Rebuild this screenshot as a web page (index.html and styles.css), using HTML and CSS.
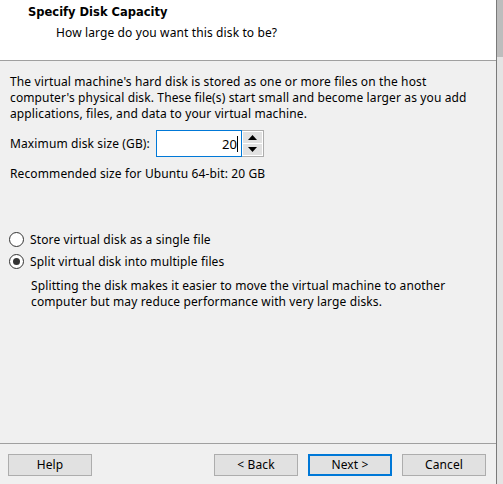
FILE: index.html
```html
<!DOCTYPE html>
<html>
<head>
<meta charset="utf-8">
<link rel="stylesheet" href="styles.css">
</head>
<body>
<div class="window">
  <div class="dialog">
    <div class="header">
      <div class="title">Specify Disk Capacity</div>
      <div class="subtitle">How large do you want this disk to be?</div>
    </div>
    <div class="content">
      <p class="intro">The virtual machine's hard disk is stored as one or more files on the host<br>computer's physical disk. These file(s) start small and become larger as you add<br>applications, files, and data to your virtual machine.</p>
      <div class="size-row">
        <span class="label">Maximum disk size (GB):</span>
        <div class="spin">
          <div class="spin-input"><span>20</span><span class="caret"></span></div>
          <div class="spin-buttons">
            <div class="spin-btn"><svg width="9" height="5" viewBox="0 0 9 5"><path d="M4.5 0 L9 5 L0 5 Z" fill="#000"/></svg></div>
            <div class="spin-btn"><svg width="9" height="5" viewBox="0 0 9 5"><path d="M0 0 L9 0 L4.5 5 Z" fill="#000"/></svg></div>
          </div>
        </div>
      </div>
      <p class="recommend">Recommended size for Ubuntu 64-bit: 20 GB</p>
      <div class="options">
        <label class="radio"><span class="circle"></span><span>Store virtual disk as a single file</span></label>
        <label class="radio"><span class="circle checked"></span><span>Split virtual disk into multiple files</span></label>
        <p class="option-desc">Splitting the disk makes it easier to move the virtual machine to another<br>computer but may reduce performance with very large disks.</p>
      </div>
    </div>
    <div class="footer">
      <button class="btn">Help</button>
      <div class="spacer"></div>
      <button class="btn">&lt; Back</button>
      <button class="btn default">Next &gt;</button>
      <button class="btn">Cancel</button>
    </div>
  </div>
  <div class="edge"></div>
</div>
</body>
</html>
```

FILE: styles.css
```css
html, body {
  margin: 0;
  padding: 0;
}
body {
  width: 503px;
  height: 484px;
  overflow: hidden;
  font-family: "Noto Sans", "DejaVu Sans", sans-serif;
  font-size: 12px;
  letter-spacing: 0.12px;
  color: #000;
  background: #f0f0f0;
}
.window {
  display: flex;
  height: 484px;
}
.dialog {
  width: 496px;
  border-right: 1px solid #7a7a7a;
  display: flex;
  flex-direction: column;
  background: #f0f0f0;
}
.edge {
  flex: 1;
  background: linear-gradient(to bottom, #bdbdbd 0, #bdbdbd 57px, #e4e4e4 57px, #e4e4e4 100%);
}
.header {
  background: #fff;
  border-bottom: 1px solid #a0a0a0;
  box-sizing: border-box;
  height: 61px;
}
.title {
  font-family: "DejaVu Sans", sans-serif;
  font-weight: bold;
  font-size: 11.5px;
  letter-spacing: 0;
  margin: 5px 0 0 28px;
  line-height: 15px;
}
.subtitle {
  margin: 5px 0 0 56px;
  line-height: 16px;
}
.content {
  flex: 1;
  padding: 13px 10px 0 10px;
  border-bottom: 1px solid #a0a0a0;
}
p {
  margin: 0;
}
.intro {
  line-height: 16px;
}
.size-row {
  display: flex;
  align-items: center;
  margin-top: 8px;
  height: 27px;
}
.label {
  width: 146px;
}
.spin {
  display: flex;
  height: 27px;
}
.spin-input {
  width: 81px;
  border: 1px solid #0078d7;
  background: #fff;
  display: flex;
  justify-content: flex-end;
  align-items: center;
  padding-right: 3px;
  font-size: 13px;
}
.caret {
  width: 1px;
  height: 16px;
  background: #000;
}
.spin-buttons {
  display: flex;
  flex-direction: column;
  width: 19px;
  border: 1px solid #adadad;
  border-left: none;
  background: #fff;
  padding: 1px;
  gap: 1px;
}
.spin-btn {
  flex: 1;
  background: #e1e1e1;
  display: flex;
  align-items: center;
  justify-content: center;
}
.recommend {
  margin-top: 9px;
  line-height: 16px;
}
.options {
  margin-top: 46px;
}
.radio {
  display: flex;
  align-items: center;
  height: 22px;
  gap: 6px;
}
.circle {
  width: 15px;
  height: 15px;
  border: 1px solid #333;
  border-radius: 50%;
  background: #fff;
  box-sizing: border-box;
  position: relative;
  margin-left: -1px;
}
.circle.checked::after {
  content: "";
  position: absolute;
  left: 3px;
  top: 3px;
  width: 7px;
  height: 7px;
  border-radius: 50%;
  background: #333;
}
.option-desc {
  margin: 6px 0 0 21px;
  line-height: 16px;
}
.footer {
  height: 40px;
  display: flex;
  align-items: flex-start;
  padding: 10px 10px 0 8px;
  gap: 10px;
  box-sizing: border-box;
}
.spacer {
  flex: 1;
}
.btn {
  width: 84px;
  height: 22px;
  border: 1px solid #adadad;
  background: #e1e1e1;
  font-family: "Noto Sans", "DejaVu Sans", sans-serif;
  font-size: 12px;
  letter-spacing: 0.12px;
  color: #000;
  padding: 0;
  line-height: 18px;
}
.btn.default {
  border: 2px solid #0078d7;
}
```
